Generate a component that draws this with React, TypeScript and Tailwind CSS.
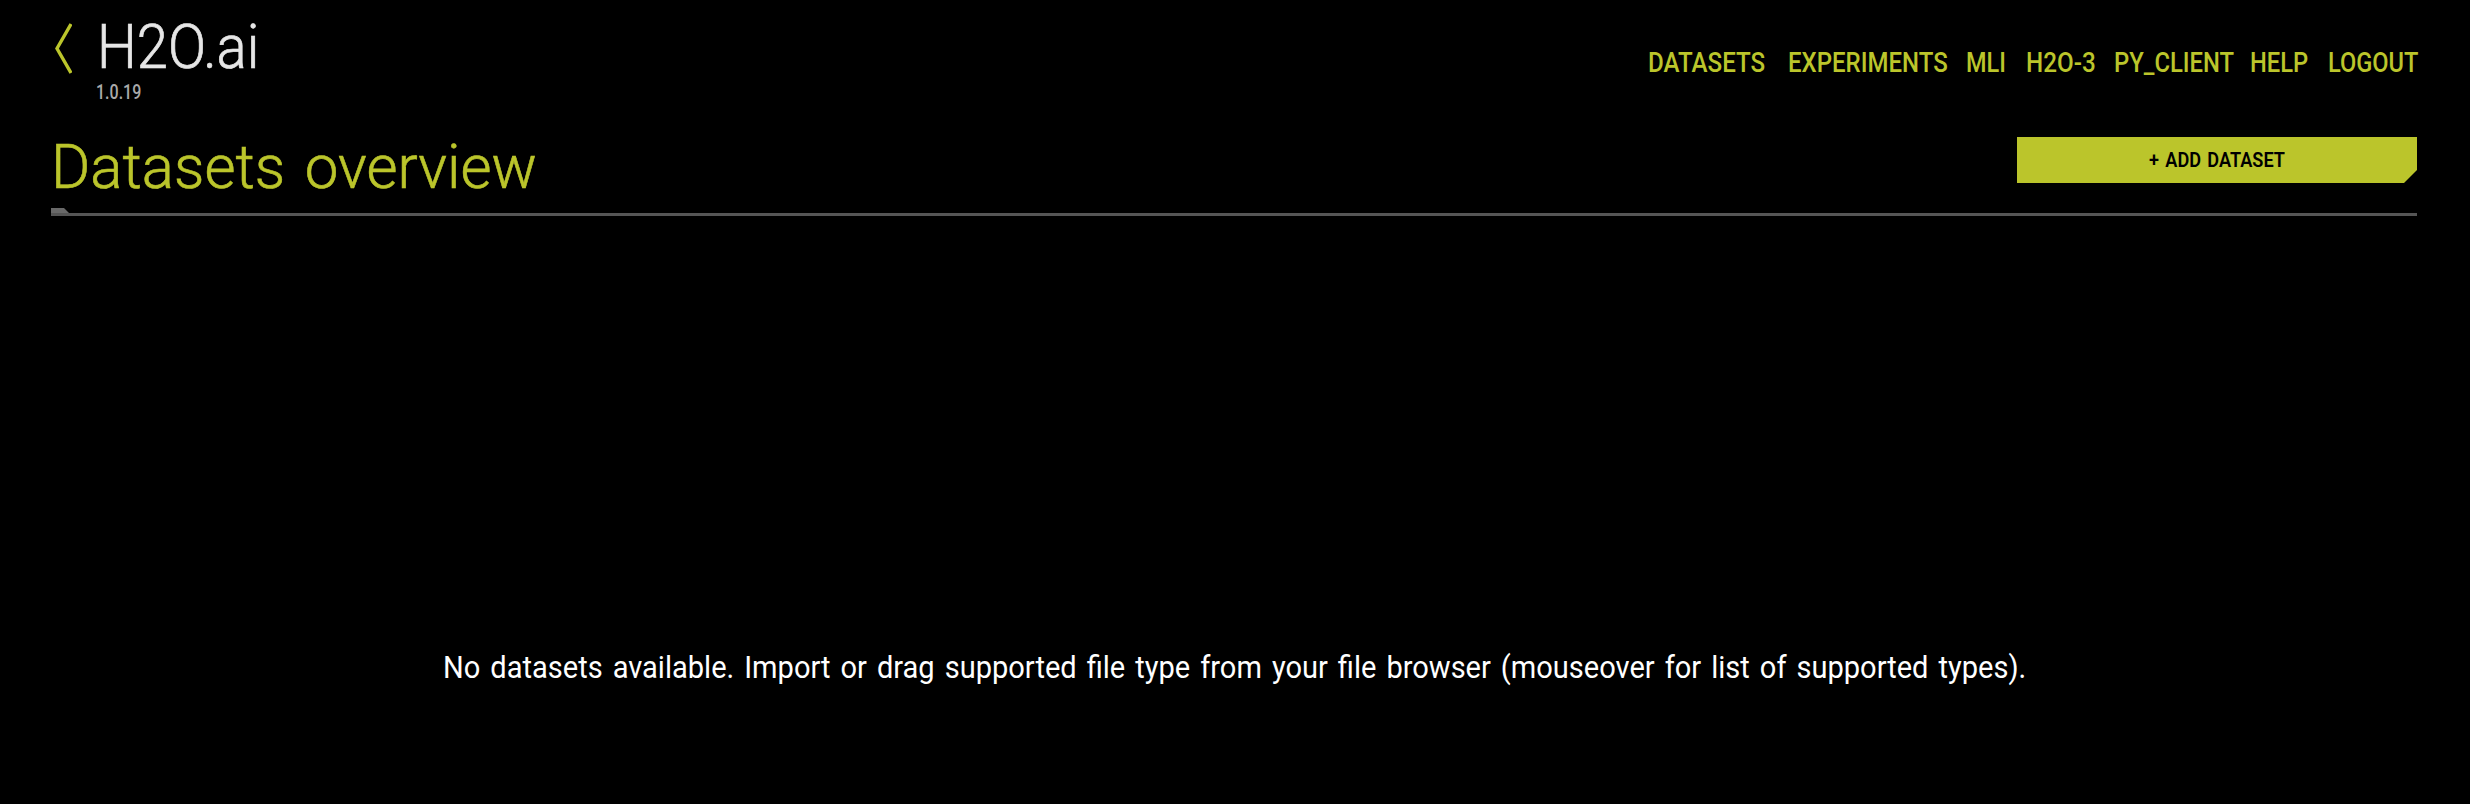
import { useLayoutEffect, useRef } from "react";

type FitTextProps = { text: string; width: number; className?: string };

// Condenses or widens a line of text so that it fills the given width.
function FitText({ text, width, className = "" }: FitTextProps) {
  const ref = useRef<HTMLSpanElement>(null);
  useLayoutEffect(() => {
    const el = ref.current;
    if (!el) return;
    const fit = () => {
      el.style.transform = `scaleX(${width / el.offsetWidth})`;
    };
    fit();
    document.fonts.ready.then(fit);
  }, [text, width]);
  return (
    <span className={`block shrink-0 ${className}`} style={{ width }}>
      <span ref={ref} className="inline-block origin-left whitespace-nowrap">
        {text}
      </span>
    </span>
  );
}

const links = [
  { label: "DATASETS", width: 117, gap: "" },
  { label: "EXPERIMENTS", width: 160, gap: "ml-[23px]" },
  { label: "MLI", width: 40, gap: "ml-[18px]" },
  { label: "H2O-3", width: 70, gap: "ml-[20px]" },
  { label: "PY_CLIENT", width: 120, gap: "ml-[18px]" },
  { label: "HELP", width: 58, gap: "ml-[16px]" },
  { label: "LOGOUT", width: 90, gap: "ml-[20px]" },
];

export default function App() {
  return (
    <div className="flex h-[804px] w-full flex-col bg-black pr-[53px] pl-[51px] font-['Roboto',sans-serif] text-[#bbc52b]">
      <header className="flex h-[120px] items-start justify-between">
        <div className="flex">
          <svg className="mt-[22px] ml-[3px] h-[53px] w-[18px]" viewBox="0 0 18 53" fill="none">
            <path d="M17 2 L3 26.5 L17 51" stroke="#bbc52b" strokeWidth="3.4" />
          </svg>
          <div className="ml-[25px] flex flex-col pt-[17px]">
            <FitText text="H2O.ai" width={162} className="text-[61px] leading-[60px] font-light text-[#e6e6e6] [-webkit-text-stroke:0.7px_#e6e6e6]" />
            <FitText text="1.0.19" width={45} className="-ml-px mt-[4px] text-[21px] leading-[22px] font-medium text-[#a9a9a9]" />
          </div>
        </div>
        <nav className="ml-auto flex translate-x-px pt-[48px] text-[27px] leading-[30px] font-medium">
          {links.map((link) => (
            <a key={link.label} href="#" className={link.gap}>
              <FitText text={link.label} width={link.width} />
            </a>
          ))}
        </nav>
      </header>
      <section className="flex h-[88px] items-start justify-between">
        <h1 className="pt-[17px]">
          <FitText text="Datasets overview" width={486} className="text-[61px] leading-[60px] font-light [word-spacing:5px] [-webkit-text-stroke:0.6px_#bbc52b]" />
        </h1>
        <button className="mt-[17px] flex h-[46px] w-[400px] items-center justify-center bg-[#bbc52b] font-semibold text-black [clip-path:polygon(0_0,100%_0,100%_33px,387px_100%,0_100%)]">
          <FitText text="+ ADD DATASET" width={136} className="text-left text-[20px] leading-[45px] [word-spacing:2px]" />
        </button>
      </section>
      <div className="h-2 border-b-3 border-[#555555]">
        <div className="h-[5px] w-[18px] bg-[#696969] [clip-path:polygon(0_0,13px_0,100%_100%,0_100%)]" />
      </div>
      <main className="flex justify-center pt-[434px] text-white">
        <FitText
          text="No datasets available. Import or drag supported file type from your file browser (mouseover for list of supported types)."
          width={1583}
          className="text-[31px] leading-[36px] [word-spacing:3px]"
        />
      </main>
    </div>
  );
}
